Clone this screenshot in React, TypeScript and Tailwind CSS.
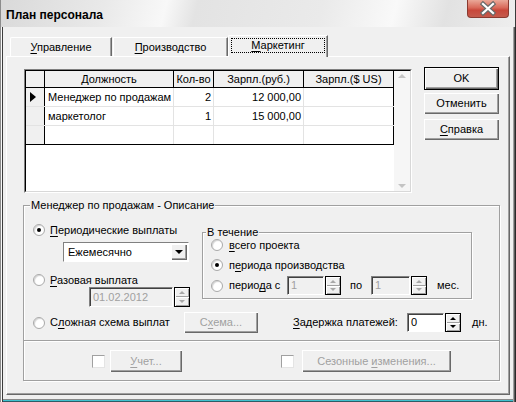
import React from "react";

type P = { className?: string; children?: React.ReactNode };

function U({ children }: P) {
  return <span className="underline decoration-1 underline-offset-[2px]">{children}</span>;
}

function Radio({ checked }: { checked?: boolean }) {
  return (
    <span className="relative block w-[12px] h-[12px] shrink-0 rounded-full bg-white border border-[#a9a9a9] shadow-[inset_1px_1px_1px_#d4d4d4]">
      {checked && <span className="absolute left-[3px] top-[3px] w-[4px] h-[4px] rounded-full bg-black" />}
    </span>
  );
}

function Check({ className }: { className?: string }) {
  return (
    <span
      className={`block w-[13px] h-[13px] shrink-0 bg-white border border-t-[#a0a0a0] border-l-[#a0a0a0] border-r-[#e4e4e4] border-b-[#e4e4e4] ${className ?? ""}`}
    />
  );
}

function Spin({ disabled, className }: { disabled?: boolean; className: string }) {
  return (
    <div className={`flex flex-col border border-black bg-[#f0f0f0] ${className}`}>
      <div className="flex-1 flex items-center justify-center shadow-[inset_1px_1px_0_#fff,inset_-1px_-1px_0_#a0a0a0]">
        <span
          className={`w-0 h-0 border-x-[3px] border-x-transparent border-b-[3px] ${disabled ? "border-b-[#a8a8a8]" : "border-b-black"}`}
        />
      </div>
      <div className="flex-1 flex items-center justify-center shadow-[inset_1px_1px_0_#fff,inset_-1px_-1px_0_#a0a0a0]">
        <span
          className={`w-0 h-0 border-x-[3px] border-x-transparent border-t-[3px] ${disabled ? "border-t-[#a8a8a8]" : "border-t-black"}`}
        />
      </div>
    </div>
  );
}

function Edit({ className, children, disabled }: P & { disabled?: boolean }) {
  return (
    <div
      className={`flex items-center pl-[3px] border border-t-[#808080] border-l-[#808080] border-r-white border-b-white shadow-[inset_1px_1px_0_#404040] ${
        disabled ? "bg-[#f0f0f0] text-[#a0a0a0]" : "bg-white text-black"
      } ${className}`}
    >
      {children}
    </div>
  );
}

function Btn({ className, children, def, disabled }: P & { def?: boolean; disabled?: boolean }) {
  return (
    <div
      className={`flex items-center justify-center bg-[#f0f0f0] shadow-[inset_1px_1px_0_#fff,inset_-1px_-1px_0_#696969,inset_-2px_-2px_0_#a0a0a0] ${
        def ? "border border-black" : ""
      } ${disabled ? "text-[#a0a0a0]" : "text-black"} ${className}`}
    >
      {children}
    </div>
  );
}

const rows = [
  { name: "Менеджер по продажам", q: "2", r: "12 000,00", cur: true },
  { name: "маркетолог", q: "1", r: "15 000,00", cur: false },
  { name: "", q: "", r: "", cur: false },
];

function Grid() {
  return (
    <div className="ml-[17px] mt-[2px] w-[388px] h-[124px] border border-t-[#808080] border-l-[#808080] border-r-white border-b-white">
      <div className="w-full h-full flex border border-t-black border-l-black border-r-[#d8d8d8] border-b-[#d8d8d8]">
        <div className="w-[368px] h-full flex flex-col bg-white">
          <div className="h-[17px] flex border-b border-black bg-[#f0f0f0]">
            <div className="w-[19px] border-r border-black" />
            <div className="w-[129px] border-r border-black flex items-center justify-center">Должность</div>
            <div className="w-[40px] border-r border-black flex items-center justify-center">Кол-во</div>
            <div className="w-[90px] border-r border-black flex items-center justify-center">Зарпл.(руб.)</div>
            <div className="w-[90px] border-r border-black flex items-center justify-center">Зарпл.($ US)</div>
          </div>
          {rows.map((r, i) => {
            const last = i === rows.length - 1;
            return (
              <div key={i} className={`h-[19px] flex border-b ${last ? "border-black" : "border-[#e3e3e3]"}`}>
                <div className="w-[19px] border-r border-black bg-[#f0f0f0] flex items-center pl-[4px]">
                  {r.cur && (
                    <span className="w-0 h-0 border-y-[5px] border-y-transparent border-l-[6px] border-l-black" />
                  )}
                </div>
                <div className="w-[129px] border-r border-[#e3e3e3] flex items-center pl-[3px]">{r.name}</div>
                <div className="w-[40px] border-r border-[#e3e3e3] flex items-center justify-end pr-[2px]">{r.q}</div>
                <div className="w-[90px] border-r border-[#e3e3e3] flex items-center justify-end pr-[2px]">{r.r}</div>
                <div className="w-[90px] border-r border-black" />
              </div>
            );
          })}
        </div>
        <div className="w-[16px] h-full bg-[#f6f6f6] flex flex-col justify-between items-center py-[3px]">
          <span className="w-0 h-0 border-x-[4px] border-x-transparent border-b-[4px] border-b-[#c4c4c4]" />
          <span className="w-0 h-0 border-x-[4px] border-x-transparent border-t-[4px] border-t-[#c4c4c4]" />
        </div>
      </div>
    </div>
  );
}

export default function App() {
  return (
    <div className="w-[516px] h-[402px] flex flex-col overflow-hidden bg-[#f0f0f0] font-['Liberation_Sans',Arial,sans-serif] text-[11px] leading-[13px] text-black">
      {/* title bar */}
      <div className="h-[27px] shrink-0 flex items-start justify-between bg-[linear-gradient(105deg,#d9d9d9_0%,#e9e9e9_20%,#f8f8f8_32%,#e3e3e3_38%,#eaeaea_62%,#f9f9f9_76%,#e2e2e2_86%,#eeeeee_100%)] shadow-[inset_1px_0_0_#8c8c8c,inset_-1px_0_0_#3a3a3a]">
        <div className="pl-[6px] pt-[8px] font-bold text-[12px] leading-[14px] text-black">План персонала</div>
        <div className="mr-[7px] w-[42px] h-[18px] rounded-b-[4px] border border-t-0 border-[#8a3a30] bg-[linear-gradient(180deg,#eaa898_0%,#d96a5a_45%,#c8473a_60%,#c45a4c_100%)]">
          <svg width="40" height="17" viewBox="0 0 40 17">
            <path d="M15 4 L25 13 M25 4 L15 13" stroke="#6a6a6a" strokeWidth="4.5" strokeLinecap="square" fill="none" />
            <path d="M15 4 L25 13 M25 4 L15 13" stroke="#ffffff" strokeWidth="2.2" strokeLinecap="square" fill="none" />
          </svg>
        </div>
      </div>

      {/* body */}
      <div className="flex-1 flex flex-col px-[3px] shadow-[inset_1px_0_0_#8c8c8c,inset_2px_0_0_#f8f8f8,inset_3px_0_0_#3c3c3c,inset_-1px_0_0_#2a2a2a,inset_-2px_0_0_#5a5a5a,inset_-3px_0_0_#a0a0a0,inset_0_-1px_0_#2d5c66,inset_0_-2px_0_#3fc1cf,inset_0_-3px_0_#8a8a8a]">
        {/* tabs */}
        <div className="mt-[8px] h-[21px] flex items-end pl-[7px] relative z-10">
          <div className="w-[102px] h-[19px] flex items-center justify-center border-t border-l border-white border-r border-r-[#696969] rounded-tl-[2px] shadow-[inset_-1px_0_0_#a0a0a0]">
            <span><U>У</U>правление</span>
          </div>
          <div className="ml-[1px] w-[115px] h-[19px] flex items-center justify-center border-t border-l border-white border-r border-r-[#696969] shadow-[inset_-1px_0_0_#a0a0a0]">
            <span><U>П</U>роизводство</span>
          </div>
          <div className="w-[100px] h-[22px] -mb-[1px] flex bg-[#f0f0f0] border-t border-l border-white border-r border-r-[#696969] rounded-tl-[2px] shadow-[inset_-1px_0_0_#a0a0a0]">
            <div className="mx-[2px] mt-[2px] mb-[4px] flex-1 flex items-center justify-center border border-dotted border-black">
              <span><U>М</U>аркетинг</span>
            </div>
          </div>
        </div>

        {/* panel */}
        <div className="mx-[3px] h-[339px] flex flex-col border border-t-white border-l-white border-r-[#696969] border-b-[#696969] shadow-[inset_-1px_-1px_0_#a0a0a0]">
          <div className="flex items-start mt-[10px]">
            <Grid />
            <div className="ml-[12px] flex flex-col">
              <Btn def className="w-[75px] h-[23px]">OK</Btn>
              <Btn className="mt-[3px] w-[75px] h-[21px]">Отменить</Btn>
              <Btn className="mt-[5px] w-[75px] h-[21px]"><span><U>С</U>правка</span></Btn>
            </div>
          </div>

          {/* group box */}
          <div className="ml-[16px] mt-[12px] w-[477px] h-[176px] relative flex flex-col border border-[#a0a0a0] shadow-[inset_1px_1px_0_#fff,1px_1px_0_#fff]">
            <span className="absolute left-[6px] top-[-7px] px-[1px] bg-[#f0f0f0]">Менеджер по продажам - Описание</span>

            <div className="h-[134px] flex flex-col">
              <div className="flex items-start">
                <div className="w-[178px] pl-[9px] flex flex-col">
                  <div className="mt-[17px] h-[14px] flex items-center gap-[5px]">
                    <Radio checked />
                    <span><U>П</U>ериодические выплаты</span>
                  </div>
                  <div className="mt-[5px] ml-[30px] w-[126px] h-[20px] flex items-center bg-white border border-t-[#808080] border-l-[#808080] border-r-white border-b-white">
                    <span className="flex-1 pl-[4px]">Ежемесячно</span>
                    <div className="w-[16px] h-[16px] mr-[1px] flex items-center justify-center bg-[#f0f0f0] shadow-[inset_1px_1px_0_#fff,inset_-1px_-1px_0_#696969,inset_-2px_-2px_0_#a0a0a0]">
                      <span className="w-0 h-0 border-x-[4px] border-x-transparent border-t-[4px] border-t-black" />
                    </div>
                  </div>
                  <div className="mt-[11px] h-[14px] flex items-center gap-[5px]">
                    <Radio />
                    <span><U>Р</U>азовая выплата</span>
                  </div>
                  <div className="ml-[56px] flex gap-[1px]">
                    <Edit disabled className="w-[84px] h-[20px]">01.02.2012</Edit>
                    <Spin disabled className="w-[16px] h-[20px]" />
                  </div>
                </div>

                <div className="mt-[26px] w-[270px] h-[67px] relative flex flex-col pl-[8px] border border-[#a0a0a0] shadow-[inset_1px_1px_0_#fff,1px_1px_0_#fff]">
                  <span className="absolute left-[3px] top-[-7px] px-[1px] bg-[#f0f0f0]">В течение</span>
                  <div className="mt-[5px] h-[14px] flex items-center gap-[6px]">
                    <Radio />
                    <span><U>в</U>сего проекта</span>
                  </div>
                  <div className="mt-[6px] h-[14px] flex items-center gap-[6px]">
                    <Radio checked />
                    <span>п<U>е</U>риода производства</span>
                  </div>
                  <div className="mt-[4px] h-[19px] flex items-center">
                    <Radio />
                    <span className="ml-[6px] w-[58px]">перио<U>д</U>а с</span>
                    <Edit disabled className="w-[37px] h-[19px]">1</Edit>
                    <Spin disabled className="ml-[1px] w-[16px] h-[19px]" />
                    <span className="ml-[9px] w-[21px]">по</span>
                    <Edit disabled className="w-[39px] h-[19px]">1</Edit>
                    <Spin disabled className="ml-[1px] w-[16px] h-[19px]" />
                    <span className="ml-[10px]">мес.</span>
                  </div>
                </div>
              </div>

              <div className="mt-[5px] h-[21px] flex items-center pl-[9px]">
                <div className="w-[151px] flex items-center gap-[5px]">
                  <Radio />
                  <span>С<U>л</U>ожная схема выплат</span>
                </div>
                <Btn disabled className="w-[74px] h-[21px]"><span>С<U>х</U>ема...</span></Btn>
                <span className="ml-[35px] w-[114px]"><U>З</U>адержка платежей:</span>
                <Edit className="w-[37px] h-[19px]">0</Edit>
                <Spin className="ml-[1px] w-[16px] h-[19px]" />
                <span className="ml-[11px]">дн.</span>
              </div>
            </div>

            <div className="flex-1 flex items-start pt-[9px] border-t border-[#a0a0a0] shadow-[inset_0_1px_0_#fff]">
              <div className="h-[22px] flex items-center">
                <Check className="ml-[68px]" />
                <Btn disabled className="ml-[5px] w-[72px] h-[22px]"><span><U>У</U>чет...</span></Btn>
                <Check className="ml-[99px]" />
                <Btn disabled className="ml-[8px] w-[149px] h-[22px]"><span>Сезонные <U>и</U>зменения...</span></Btn>
              </div>
            </div>
          </div>
        </div>
      </div>
    </div>
  );
}
